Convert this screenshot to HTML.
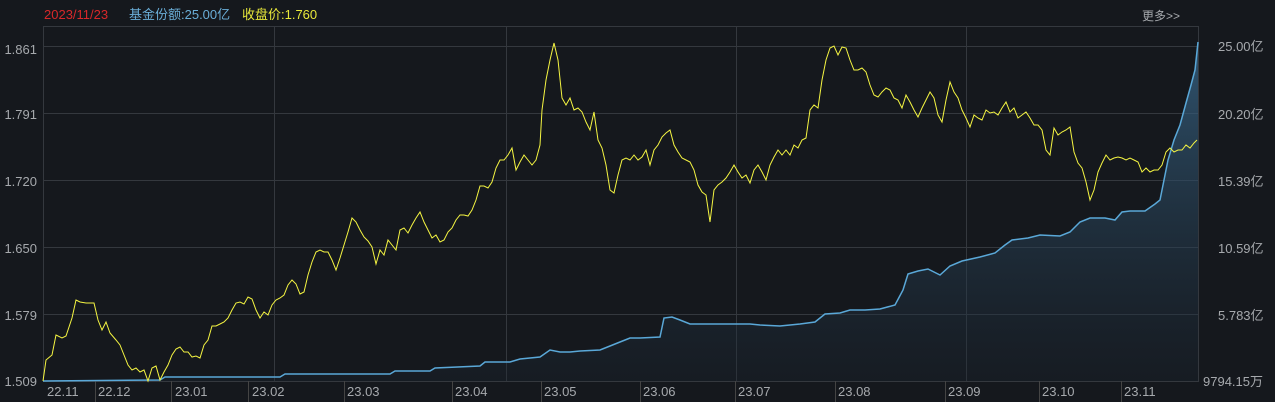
<!DOCTYPE html><html><head><meta charset="utf-8"><style>
body{margin:0;background:#15181d;width:1275px;height:402px;overflow:hidden;font-family:"Liberation Sans","Noto Sans CJK SC",sans-serif}
</style></head><body>
<svg width="1275" height="402" xmlns="http://www.w3.org/2000/svg" style="display:block">
<defs><linearGradient id="g" x1="0" y1="0" x2="0" y2="1"><stop offset="0" stop-color="#3a6a8e" stop-opacity="0.75"/><stop offset="1" stop-color="#1a2530" stop-opacity="0.3"/></linearGradient></defs>
<rect width="1275" height="402" fill="#15181d"/>
<g stroke="#34383e" stroke-width="1" fill="none">
<rect x="43.5" y="26.5" width="1155" height="355"/>
<line x1="43" y1="46.5" x2="1198" y2="46.5"/><line x1="43" y1="113.5" x2="1198" y2="113.5"/><line x1="43" y1="180.5" x2="1198" y2="180.5"/><line x1="43" y1="247.5" x2="1198" y2="247.5"/><line x1="43" y1="314.5" x2="1198" y2="314.5"/>
<line x1="274.5" y1="26" x2="274.5" y2="381"/><line x1="506.5" y1="26" x2="506.5" y2="381"/><line x1="736.5" y1="26" x2="736.5" y2="381"/><line x1="966.5" y1="26" x2="966.5" y2="381"/>
<g stroke="#444"><line x1="95.5" y1="381" x2="95.5" y2="402"/><line x1="171.5" y1="381" x2="171.5" y2="402"/><line x1="248.5" y1="381" x2="248.5" y2="402"/><line x1="344.5" y1="381" x2="344.5" y2="402"/><line x1="452.5" y1="381" x2="452.5" y2="402"/><line x1="541.5" y1="381" x2="541.5" y2="402"/><line x1="640.5" y1="381" x2="640.5" y2="402"/><line x1="735.5" y1="381" x2="735.5" y2="402"/><line x1="835.5" y1="381" x2="835.5" y2="402"/><line x1="945.5" y1="381" x2="945.5" y2="402"/><line x1="1039.5" y1="381" x2="1039.5" y2="402"/><line x1="1121.5" y1="381" x2="1121.5" y2="402"/></g>
</g>
<polygon fill="url(#g)" points="43,381 160,380 165,377 280,377 285,374 390,374 395,371 430,371 435,368 480,366 485,362 510,362 520,359 540,357 550,350 560,352 570,352 580,351 600,350 610,346 620,342 630,338 640,338 660,337 664,318 672,317 680,320 690,324 700,324 750,324 760,325 780,326 800,324 815,322 825,314 840,313 850,310 865,310 880,309 895,305 903,290 908,274 918,271 928,269 940,275 950,266 962,261 980,257 995,253 1005,245 1012,240 1028,238 1040,235 1060,236 1070,232 1080,222 1090,218 1105,218 1115,220 1122,212 1130,211 1145,211 1155,204 1160,200 1163,185 1168,160 1174,140 1180,125 1186,103 1191,85 1195,70 1198,42 1198,381"/>
<polyline fill="none" stroke="#5aa8d8" stroke-width="1.5" points="43,381 160,380 165,377 280,377 285,374 390,374 395,371 430,371 435,368 480,366 485,362 510,362 520,359 540,357 550,350 560,352 570,352 580,351 600,350 610,346 620,342 630,338 640,338 660,337 664,318 672,317 680,320 690,324 700,324 750,324 760,325 780,326 800,324 815,322 825,314 840,313 850,310 865,310 880,309 895,305 903,290 908,274 918,271 928,269 940,275 950,266 962,261 980,257 995,253 1005,245 1012,240 1028,238 1040,235 1060,236 1070,232 1080,222 1090,218 1105,218 1115,220 1122,212 1130,211 1145,211 1155,204 1160,200 1163,185 1168,160 1174,140 1180,125 1186,103 1191,85 1195,70 1198,42"/>
<polyline fill="none" stroke="#f5f542" stroke-width="1" points="43,381 46,360 52,355 56,335 62,338 66,336 72,318 76,300 80,302 86,303 94,303 98,320 102,330 106,322 110,333 116,340 120,345 124,355 128,365 132,370 136,368 140,372 144,370 148,381 152,368 156,366 160,380 164,372 168,365 172,355 176,349 180,347 184,352 188,352 192,357 196,356 200,358 204,345 208,340 212,326 216,326 220,324 224,322 228,318 232,310 236,303 240,302 244,304 248,297 252,299 256,310 260,318 264,312 268,315 272,305 276,300 280,298 284,295 288,285 292,280 296,284 300,294 304,292 308,275 312,262 316,252 320,250 324,252 328,252 332,260 336,270 340,258 344,245 348,232 352,218 356,222 360,230 364,237 368,241 372,247 376,264 380,250 384,255 388,240 392,245 396,250 400,230 404,228 408,233 412,225 416,218 420,212 424,222 428,230 432,238 436,235 440,242 444,240 448,232 452,228 456,220 460,215 464,215 468,216 472,210 476,200 480,186 484,186 488,188 492,182 496,168 500,160 504,160 508,155 512,148 516,170 520,162 524,155 528,160 532,165 536,160 540,145 542,110 546,80 550,60 554,43 558,60 562,98 566,105 570,98 574,110 578,108 582,112 586,122 590,130 594,112 598,140 602,148 606,165 610,190 614,193 618,175 622,160 626,158 630,160 634,155 638,160 642,157 646,150 650,165 654,150 658,145 662,137 666,133 670,130 674,145 678,152 682,158 686,160 690,162 694,170 698,185 702,192 706,195 710,222 714,190 718,185 722,182 726,178 730,172 734,165 738,172 742,178 746,175 750,183 754,170 758,165 762,172 766,180 770,165 774,157 778,150 782,155 786,150 790,155 794,145 798,148 802,140 806,138 810,110 814,105 818,108 822,80 826,60 830,48 834,46 838,55 842,47 846,48 850,60 854,70 858,70 862,68 866,72 870,85 874,95 878,97 882,92 886,88 890,90 894,98 898,100 902,108 906,95 910,102 914,110 918,117 922,108 926,100 930,92 934,98 938,115 942,122 946,100 950,82 954,92 958,98 962,110 966,118 970,127 974,115 978,118 982,120 986,110 990,113 994,112 998,115 1002,108 1006,102 1010,112 1014,108 1018,118 1022,115 1026,112 1030,118 1034,125 1038,125 1042,130 1046,150 1050,155 1054,128 1058,135 1062,132 1066,130 1070,127 1074,152 1078,163 1082,168 1086,182 1090,200 1094,190 1098,172 1102,163 1106,155 1110,160 1114,158 1118,157 1122,158 1126,160 1130,158 1134,160 1138,162 1142,172 1146,168 1150,172 1154,170 1158,170 1162,165 1166,152 1170,148 1174,152 1178,150 1182,150 1186,145 1190,148 1194,143 1197,140"/>
<g font-size="13" fill="#a6a9ad" font-family="Liberation Sans,Noto Sans CJK SC,sans-serif">
<text x="44" y="19" fill="#d8282a">2023/11/23</text>
<text x="129" y="19" fill="#6aaed8">基金份额:25.00亿</text>
<text x="242" y="19" fill="#e8e83a">收盘价:1.760</text>
<text x="1142" y="20" font-size="12">更多&gt;&gt;</text>
<g text-anchor="end"><text x="37" y="54">1.861</text><text x="37" y="119">1.791</text><text x="37" y="186">1.720</text><text x="37" y="253">1.650</text><text x="37" y="320">1.579</text><text x="37" y="386">1.509</text></g>
<text x="1218" y="51">25.00亿</text><text x="1218" y="119">20.20亿</text><text x="1218" y="186">15.39亿</text><text x="1218" y="253">10.59亿</text><text x="1218" y="320">5.783亿</text><text x="1203" y="386">9794.15万</text>
<g font-size="13"><text x="47" y="396">22.11</text><text x="98" y="396">22.12</text><text x="175" y="396">23.01</text><text x="252" y="396">23.02</text><text x="347" y="396">23.03</text><text x="455" y="396">23.04</text><text x="544" y="396">23.05</text><text x="643" y="396">23.06</text><text x="738" y="396">23.07</text><text x="838" y="396">23.08</text><text x="948" y="396">23.09</text><text x="1042" y="396">23.10</text><text x="1124" y="396">23.11</text></g>
</g>
</svg>
</body></html>
